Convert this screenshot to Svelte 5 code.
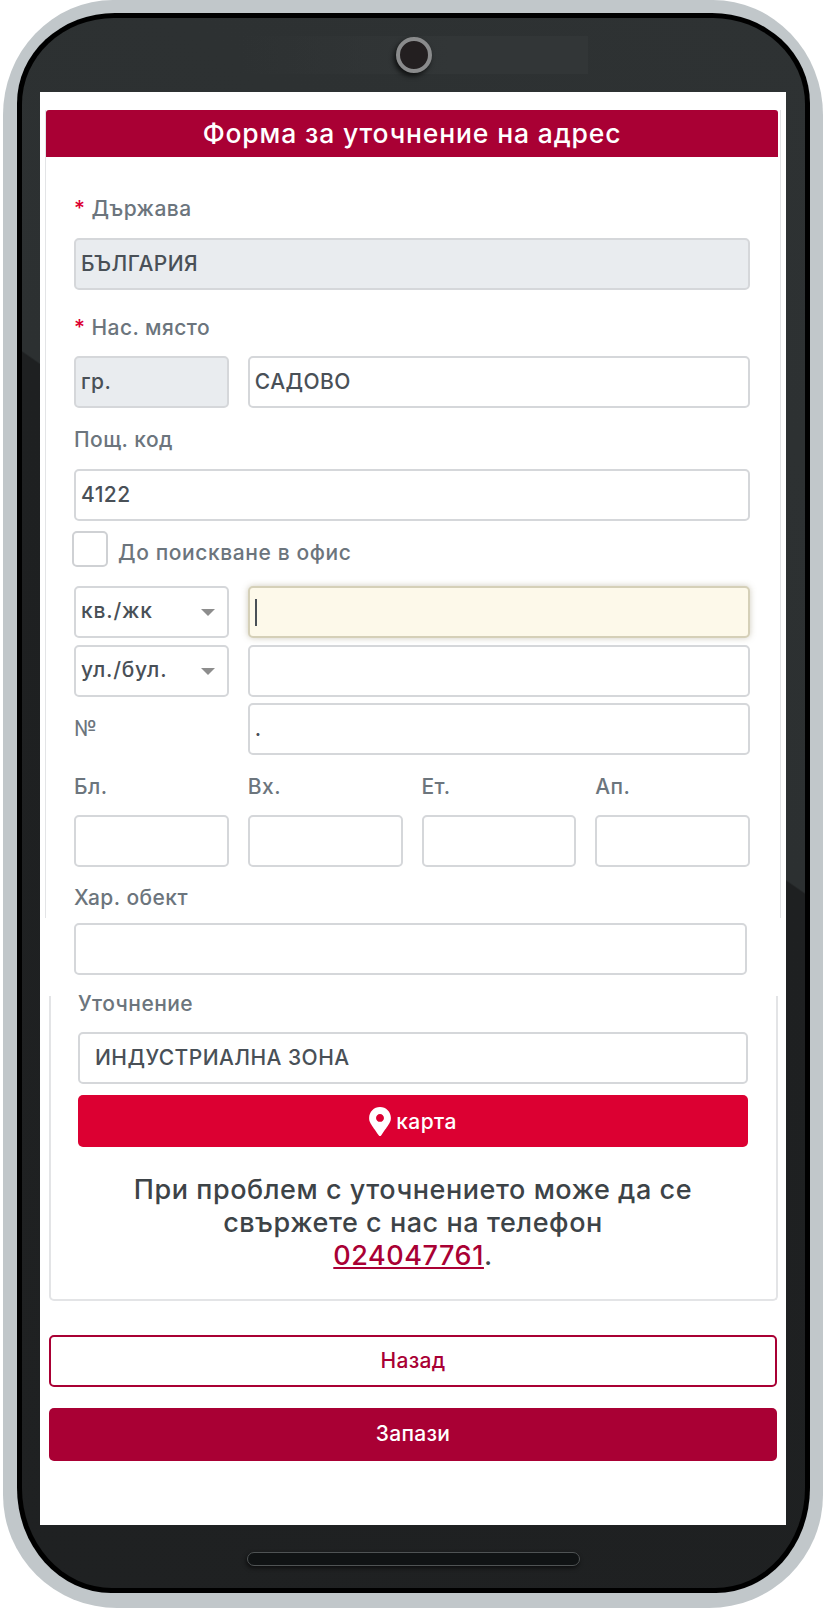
<script>
  let fieldValues = { country: 'БЪЛГАРИЯ', city: 'САДОВО', zip: '4122' };
</script>

<div class="phone">
  <div class="black">
    <div class="bezel">
      <div class="speaker"></div>
      <div class="camera"></div>
      <div class="home"></div>

      <div class="screen">
        <section class="card">
          <h1>Форма за уточнение на адрес</h1>
          <div class="card-body">
            <label class="lbl first"><span class="req">*</span> Държава</label>
            <input class="ctl off" readonly value={fieldValues.country} />

            <label class="lbl sec"><span class="req">*</span> Нас. място</label>
            <div class="row">
              <input class="ctl off" readonly value="гр." />
              <input class="ctl wide" readonly value={fieldValues.city} />
            </div>

            <label class="lbl zip">Пощ. код</label>
            <input class="ctl" readonly value={fieldValues.zip} />

            <div class="check-row">
              <span class="box"></span>
              <span class="check-text">До поискване в офис</span>
            </div>

            <div class="row quarter">
              <div class="sel">кв./жк<i class="arrow"></i></div>
              <div class="ctl wide focus"><span class="caret"></span></div>
            </div>
            <div class="row tight">
              <div class="sel">ул./бул.<i class="arrow"></i></div>
              <input class="ctl wide" readonly />
            </div>
            <div class="row tight">
              <span class="no">№</span>
              <input class="ctl wide" readonly value="." />
            </div>

            <div class="row parts">
              <label class="lbl">Бл.</label>
              <label class="lbl">Вх.</label>
              <label class="lbl">Ет.</label>
              <label class="lbl">Ап.</label>
              <input class="ctl" readonly />
              <input class="ctl" readonly />
              <input class="ctl" readonly />
              <input class="ctl" readonly />
            </div>

            <label class="lbl obj">Хар. обект</label>
          </div>
        </section>

        <input class="ctl obj-input" readonly />

        <section class="panel">
          <label class="lbl spec">Уточнение</label>
          <input class="ctl spec-input" readonly value="ИНДУСТРИАЛНА ЗОНА" />
          <button class="map">
            <svg width="22" height="29" viewBox="0 0 384 512" aria-hidden="true">
              <path fill="#fff" fill-rule="evenodd" d="M172.268 501.67C26.97 291.031 0 269.413 0 192 0 85.961 85.961 0 192 0s192 85.961 192 192c0 77.413-26.97 99.031-172.268 309.67-9.535 13.774-29.93 13.773-39.464 0zM192 262c38.66 0 70-31.34 70-70s-31.34-70-70-70-70 31.34-70 70 31.34 70 70 70z"/>
            </svg>
            карта
          </button>
          <p class="note">
            При проблем с уточнението може да се<br />
            свържете с нас на телефон<br />
            <a href="#tel">024047761</a>.
          </p>
        </section>

        <button class="btn back">Назад</button>
        <button class="btn save">Запази</button>
      </div>
    </div>
  </div>
</div>

<style>
  :global(body) {
    margin: 0;
    background: #fff;
  }

  .phone {
    box-sizing: border-box;
    width: 820px;
    height: 1608px;
    margin-left: 3px;
    padding: 13px 13px 15px 14px;
    background: #c1c7ca;
    border-radius: 110px 110px 114px 114px / 115px 115px 113px 113px;
    font-family: Inter, "Liberation Sans", sans-serif;
  }

  .black {
    box-sizing: border-box;
    height: 100%;
    padding: 5px;
    background: #000;
    border-radius: 98px 98px 94px 94px / 90px 90px 105px 105px;
  }

  .bezel {
    position: relative;
    box-sizing: border-box;
    height: 100%;
    padding: 74px 19px 63px 18px;
    /* diagonal reflection across the glass */
    background: linear-gradient(214.7deg, #2e3233 0%, #2c3031 41.4%, #1e2021 41.5%, #1f2122 100%);
    border-radius: 92px 92px 90px 90px / 86px 86px 100px 100px;
  }

  .speaker {
    position: absolute;
    left: 218px;
    top: 18px;
    width: 348px;
    height: 38px;
    background: linear-gradient(90deg, rgba(52, 56, 57, 0) 0%, #323637 60%);
  }

  .camera {
    position: absolute;
    left: 374px;
    top: 19px;
    box-sizing: border-box;
    width: 36px;
    height: 36px;
    background: #231f20;
    border: 4px solid #8a8b8c;
    border-radius: 50%;
    box-shadow: -2px 3px 5px rgba(0, 0, 0, 0.7);
  }

  .home {
    position: absolute;
    left: 225px;
    bottom: 22px;
    box-sizing: border-box;
    width: 333px;
    height: 14px;
    background: #101314;
    border: 1px solid #4f5354;
    border-radius: 7px;
    box-shadow: -1px 2px 4px rgba(0, 0, 0, 0.6);
  }

  .screen {
    box-sizing: border-box;
    height: 1433px;
    padding-top: 18px;
    background: #fff;
    overflow: hidden;
  }

  .card {
    margin: 0 5px;
    border: solid #e3e4e6;
    border-width: 0 1px;
  }

  h1 {
    margin: 0 2px 0 0;
    height: 47px;
    line-height: 46px;
    background: #a90034;
    border-radius: 3px 3px 0 0;
    color: #fff;
    font-size: 26.5px;
    font-weight: 500;
    letter-spacing: 0.85px;
    text-align: center;
  }

  .card-body {
    display: flex;
    flex-direction: column;
    padding: 40px 30px 8px 28px;
  }

  .lbl {
    display: block;
    height: 24px;
    line-height: 24px;
    color: #6c757d;
    font-size: 21px;
    font-weight: 500;
    letter-spacing: 0.45px;
    white-space: nowrap;
  }

  .req {
    color: #dc0032;
  }

  .first,
  .sec,
  .zip,
  .obj {
    margin-bottom: 17px;
  }

  .sec {
    margin-top: 26px;
    margin-bottom: 16px;
  }

  .zip {
    margin-top: 20px;
  }

  .obj {
    margin: 19px 0 0;
  }

  .ctl,
  .sel {
    box-sizing: border-box;
    display: block;
    width: 100%;
    height: 52px;
    padding: 0 5px;
    background: #fff;
    border: 2px solid #d5d7da;
    border-radius: 5px;
    color: #495057;
    font-family: inherit;
    font-size: 21px;
    font-weight: 500;
    letter-spacing: 0.45px;
    outline: none;
  }

  input.ctl {
    padding-bottom: 2px;
  }

  .off {
    background: #e9ecef;
  }

  .row {
    display: grid;
    grid-template-columns: repeat(4, 1fr);
    column-gap: 19px;
  }

  .wide {
    grid-column: span 3;
  }

  .quarter {
    margin-top: 19px;
  }

  .tight {
    margin-top: 6.5px;
  }

  .parts {
    margin-top: 20px;
    row-gap: 16px;
  }

  .check-row {
    display: flex;
    align-items: center;
    gap: 10px;
    margin: 10px 0 0 -2px;
    height: 36px;
  }

  .box {
    box-sizing: border-box;
    width: 36px;
    height: 36px;
    background: #fff;
    border: 2px solid #cfd1d4;
    border-radius: 5px;
  }

  .check-text {
    margin-top: 6px;
    color: #6c757d;
    font-size: 21px;
    font-weight: 500;
    letter-spacing: 0.6px;
  }

  .sel {
    position: relative;
    line-height: 46px;
    letter-spacing: 0.8px;
  }

  .arrow {
    position: absolute;
    right: 12px;
    top: 21px;
    width: 0;
    height: 0;
    border: solid transparent;
    border-width: 7px 7px 0;
    border-top-color: #8d8d8d;
  }

  .focus {
    display: flex;
    align-items: center;
    background: #fdf9ea;
    border-color: #d5d0b8;
    box-shadow: 0 0 6px rgba(120, 110, 70, 0.35);
  }

  .caret {
    width: 2px;
    height: 27px;
    background: #495057;
  }

  .no {
    align-self: center;
    margin-top: -2px;
    color: #6c757d;
    font-size: 21px;
  }

  .obj-input {
    width: 673px;
    margin: 5px 0 0 34px;
  }

  .panel {
    box-sizing: border-box;
    display: flex;
    flex-direction: column;
    width: 729px;
    height: 305px;
    margin: 21px 0 0 9px;
    padding: 0 28px 0 27px;
    border: solid #e3e4e6;
    border-width: 0 2px 2px;
    border-radius: 0 0 5px 5px;
  }

  .spec {
    height: 16px;
    line-height: 16px;
    margin-bottom: 20px;
  }

  .ctl.spec-input {
    padding-left: 15px;
  }

  .map {
    display: flex;
    align-items: center;
    justify-content: center;
    gap: 5px;
    height: 52px;
    margin-top: 11px;
    padding: 0;
    background: #dc0032;
    border: 0;
    border-radius: 5px;
    color: #fff;
    font-family: inherit;
    font-size: 21px;
    font-weight: 500;
    letter-spacing: 0.4px;
  }

  .note {
    margin: 26px 0 0;
    color: #3d4347;
    font-size: 27px;
    font-weight: 500;
    letter-spacing: 0.55px;
    line-height: 33px;
    text-align: center;
  }

  .note a {
    color: #a90034;
    text-decoration: underline;
  }

  .btn {
    display: block;
    box-sizing: border-box;
    width: 728px;
    margin-left: 9px;
    font-family: inherit;
    font-size: 21px;
    font-weight: 500;
    letter-spacing: 0.3px;
    border-radius: 5px;
  }

  .back {
    height: 52px;
    margin-top: 34px;
    padding-bottom: 3px;
    background: #fff;
    border: 2px solid #a90034;
    color: #a90034;
  }

  .save {
    height: 53px;
    margin-top: 21px;
    padding-bottom: 3px;
    background: #a90034;
    border: 0;
    color: #fff;
  }
</style>
